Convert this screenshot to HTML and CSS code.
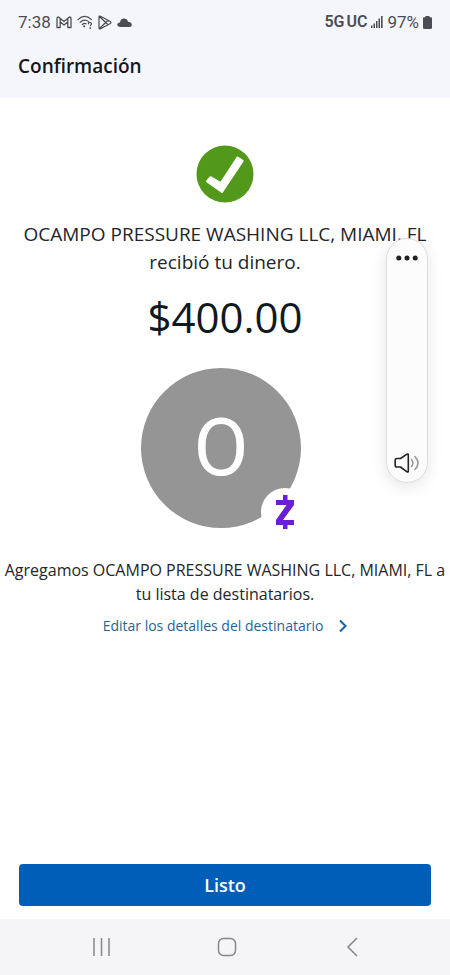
FILE: index.html
```html
<!DOCTYPE html>
<html lang="es">
<head>
<meta charset="utf-8">
<meta name="viewport" content="width=device-width, initial-scale=1">
<title>Confirmación</title>
<link rel="stylesheet" href="styles.css">
</head>
<body>
<div class="screen">
  <header class="header">
    <div class="status">
      <div class="status-group">
        <span class="clock">7:38</span>
        <svg viewBox="0 0 16 13" width="16" height="13" fill="none" stroke="#4b4d52" stroke-width="1.3" stroke-linejoin="round"><path d="M1 11.500V2.500Q1 1 2.500 1L8 5.500L13.500 1Q15 1 15 2.500V11.500H11.800V6L8 9L4.200 6V11.500ZM4.200 6V2.500M11.800 6V2.500"/></svg>
        <svg viewBox="0 0 16 14" width="16" height="14" fill="none" stroke="#4b4d52" stroke-width="1.2" stroke-linecap="round"><path d="M1 4.600Q7.500-1.800 14.500 4.600M3.200 7.200Q7.500 3.200 11.600 6.600M5.300 9.500Q7.500 7.600 9 8.800M11.300 8.800Q11.700 7.300 13.200 7.500Q14.800 8 14.300 9.300L13.300 10.700"/><circle cx="7.200" cy="11.300" r=".5"/><circle cx="13.300" cy="13" r=".3"/></svg>
        <svg viewBox="0 0 14 15" width="14" height="15" fill="none" stroke="#4b4d52" stroke-width="1.200" stroke-linejoin="round"><path d="M1 2.200Q1 .5 2.500 1.200L12.300 6.500Q13.600 7.500 12.300 8.500L2.500 13.800Q1 14.500 1 12.800ZM1.500 1.500L10 9.700M1.500 13.500L10 5.300"/></svg>
        <svg viewBox="0 0 15 9" width="15" height="9" fill="#4b4d52"><path d="M3 9Q0 8.500 .3 6.300Q.8 4.300 3 4.500Q3.500 .5 7 .5Q10 .5 11 3.800Q14.800 4.200 14.800 7Q14.500 9 12.500 9Z"/></svg>
      </div>
      <div class="status-group status-right">
        <span class="network"><span>5G</span><span>UC</span></span>
        <svg viewBox="0 0 12 12" width="12" height="12" fill="#4b4d52"><path d="M0 9.500h1.500V12H0zM2.500 7.500H4V12H2.500zM5 5h1.500v7H5zM7.500 2.500H9V12H7.500zM10 0h1.600v12H10z"/></svg>
        <span class="percent">97%</span>
        <svg viewBox="0 0 9 13" width="9" height="13" fill="#4b4d52"><path d="M2.500 0h4v1.300H8Q9 1.300 9 2.500V11.500Q9 13 7.500 13h-6Q0 13 0 11.500V2.500Q0 1.300 1 1.300h1.500z"/></svg>
      </div>
    </div>
    <h1 class="title">Confirmación</h1>
  </header>

  <main class="content">
    <svg viewBox="0 0 58 58" width="58" height="58"><circle cx="29" cy="29" r="28.500" fill="#52981a"/><path d="M11 36.500L14.500 32.200L24.800 38L41.500 12.500L46.700 15.900L26 47Z" fill="#fff" stroke="#fff" stroke-width="2" stroke-linejoin="round"/></svg>
    <p class="message">OCAMPO PRESSURE WASHING LLC, MIAMI, FL recibió tu dinero.</p>
    <p class="amount">$400.00</p>
    <div class="recipient">
      <div class="avatar">O</div>
      <span class="badge"><svg viewBox="0 0 20 36" width="20" height="36" fill="#6c1fd0"><path d="M8 1h4.500v5H19v5L8 26h11v5h-6.500v4H8v-4H1v-5L11.500 11H1V6h7z"/></svg></span>
    </div>
    <p class="note">Agregamos OCAMPO PRESSURE WASHING LLC, MIAMI, FL a tu lista de destinatarios.</p>
    <a class="edit" href="#">Editar los detalles del destinatario
      <svg viewBox="0 0 8 14" width="8" height="14" fill="none" stroke="#1262a8" stroke-width="2"><path d="M1 1.500L6.500 7L1 12.500"/></svg>
    </a>
  </main>

  <div class="actions"><button class="done" type="button">Listo</button></div>

  <nav class="navbar">
    <button type="button" aria-label="Recientes"><svg viewBox="0 0 20 20" width="20" height="20" stroke="#85868a" stroke-width="1.500"><path d="M2 1v18M9.500 1v18M17 1v18"/></svg></button>
    <button type="button" aria-label="Inicio"><svg viewBox="0 0 20 20" width="20" height="20" fill="none" stroke="#85868a" stroke-width="1.500"><rect x="1.500" y="1.500" width="17" height="17" rx="5"/></svg></button>
    <button type="button" aria-label="Atrás"><svg viewBox="0 0 20 20" width="20" height="20" fill="none" stroke="#85868a" stroke-width="1.500"><path d="M15 1L6 10L15 19"/></svg></button>
  </nav>

  <div class="volume">
    <button type="button" aria-label="Más opciones"><svg viewBox="0 0 22 6" width="22" height="6" fill="#222"><circle cx="2.800" cy="3" r="2.500"/><circle cx="11" cy="3" r="2.500"/><circle cx="19.200" cy="3" r="2.500"/></svg></button>
    <button type="button" aria-label="Sonido"><svg viewBox="0 0 26 20" width="26" height="20" fill="none" stroke-width="1.600" stroke-linecap="round" stroke-linejoin="round"><path stroke="#242424" d="M3 5.500H6.500L13 1.200Q14.300.500 14.300 2V18Q14.300 19.500 13 18.800L6.500 14H3Q1.200 14 1.200 12.500V7Q1.200 5.500 3 5.500Z"/><path stroke="#999" d="M17.500 6.500Q20.300 10 17.500 13.500M21 3.500Q27 10 21 16.500"/></svg></button>
  </div>
</div>
</body>
</html>
```

FILE: styles.css
```css
* {
  box-sizing: border-box;
}

body {
  margin: 0;
  background: #fff;
  color: #22262a;
  font-family: "Open Sans", "Noto Sans", sans-serif;
}

h1,
p {
  margin: 0;
}

button {
  border: 0;
  padding: 0;
  background: none;
  font-family: inherit;
  cursor: pointer;
}

svg {
  display: block;
  flex: none;
}

.screen {
  position: relative;
  display: flex;
  flex-direction: column;
  min-height: 100vh;
}

.header {
  padding: 12px 18px 19px;
  background: #f5f6fb;
}

.status {
  display: flex;
  justify-content: space-between;
  height: 20px;
  color: #4b4d52;
  font-family: Roboto, sans-serif;
  font-size: 17px;
  line-height: 20px;
}

.status-group {
  display: flex;
  align-items: center;
  gap: 5px;
}

.status-right {
  gap: 4px;
}

.network {
  display: flex;
  gap: 2px;
  font-size: 16px;
  font-weight: 600;
}

.title {
  margin-top: 21px;
  color: #14181c;
  font-size: 19px;
  font-weight: 600;
  line-height: 26px;
}

.content {
  flex: 1;
  display: flex;
  flex-direction: column;
  align-items: center;
  padding-top: 47px;
  text-align: center;
}

.message {
  margin-top: 17px;
  padding: 0 20px;
  font-size: 19px;
  line-height: 28px;
}

.amount {
  margin-top: 13px;
  color: #101820;
  font-size: 42px;
  line-height: 56px;
}

.recipient {
  position: relative;
  margin-top: 23px;
  padding-right: 8px;
}

.avatar {
  width: 160px;
  height: 160px;
  border-radius: 50%;
  background: #959595;
  color: #fff;
  font-family: Roboto, sans-serif;
  font-size: 80px;
  line-height: 160px;
}

.badge {
  position: absolute;
  right: 0;
  bottom: -8px;
  display: flex;
  align-items: center;
  justify-content: center;
  width: 48px;
  height: 48px;
  border-radius: 50%;
  background: #fff;
}

.note {
  margin-top: 30px;
  font-size: 16px;
  line-height: 24px;
}

.edit {
  display: flex;
  align-items: center;
  gap: 16px;
  margin-top: 10px;
  color: #1f6496;
  font-size: 14px;
  line-height: 20px;
  text-decoration: none;
}

.actions {
  padding: 0 19px 13px;
}

.done {
  display: block;
  width: 100%;
  height: 42px;
  border-radius: 4px;
  background: #005eb8;
  color: #fff;
  font-size: 18px;
  font-weight: 600;
}

.navbar {
  display: flex;
  justify-content: space-around;
  align-items: center;
  height: 56px;
  padding: 0 36px 0 40px;
  background: #f5f5f7;
}

.volume {
  position: absolute;
  top: 238px;
  right: 22px;
  display: flex;
  flex-direction: column;
  align-items: center;
  justify-content: space-between;
  width: 42px;
  height: 245px;
  padding: 16px 0 9px;
  border: 1px solid #ddd;
  border-radius: 21px;
  background: #fcfcfc;
  box-shadow: 0 4px 16px rgba(0, 0, 0, 0.1);
}
```
